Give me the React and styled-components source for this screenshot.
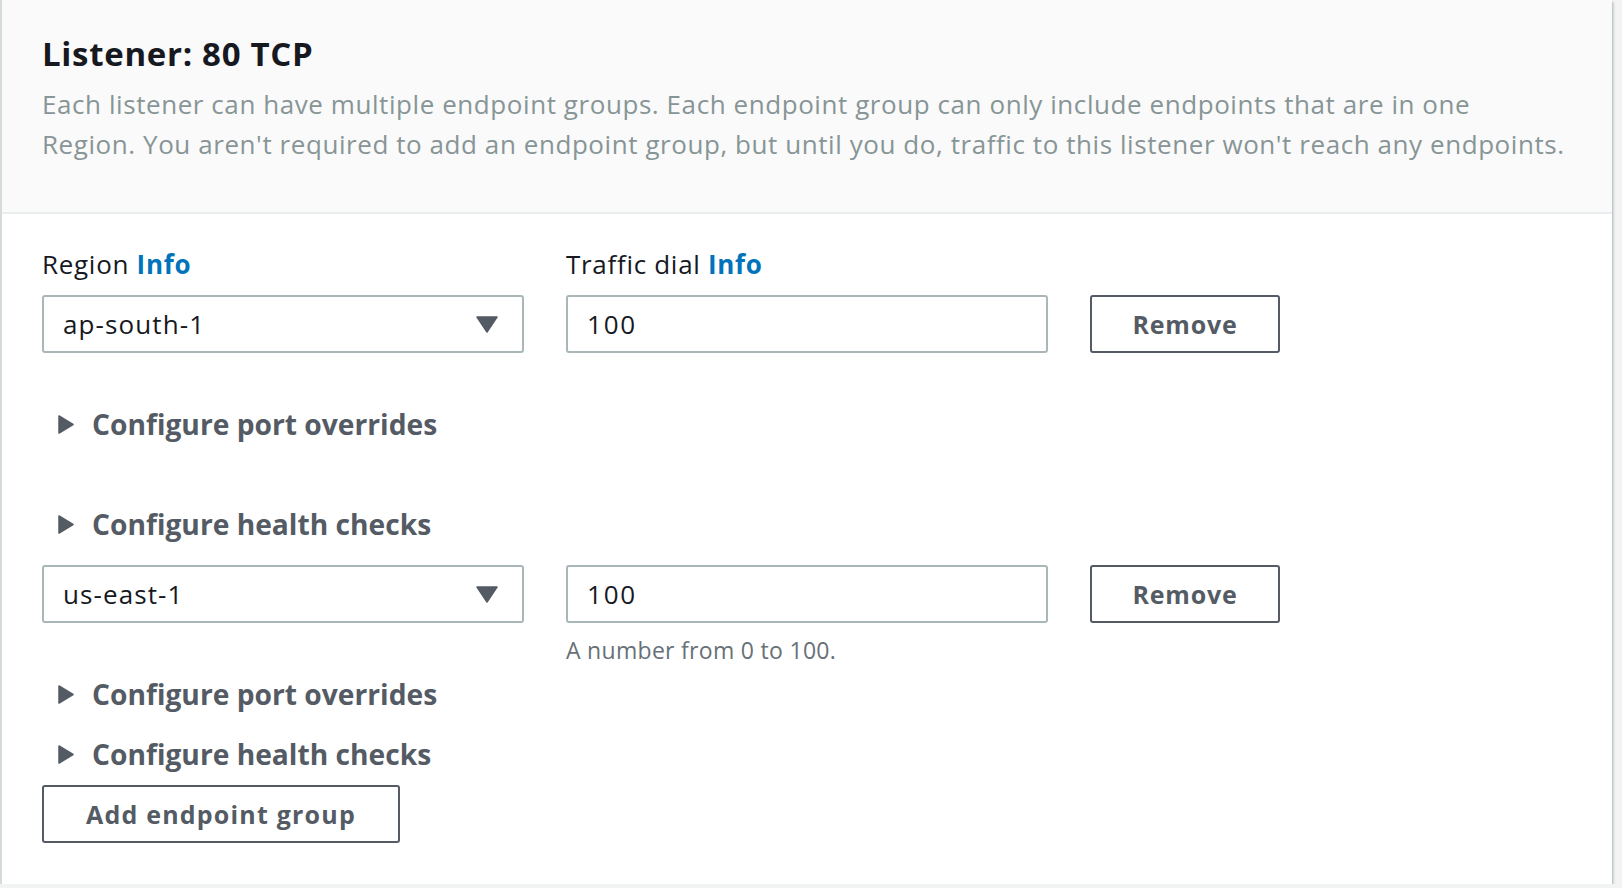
import React from "react";
import styled, { createGlobalStyle } from "styled-components";

const Global = createGlobalStyle`
  html, body { margin: 0; padding: 0; }
  body {
    background: #f2f3f3;
    font-family: "Open Sans", "Noto Sans", sans-serif;
    color: #16191f;
  }
`;

const Panel = styled.section`
  width: 1612px;
  height: 884px;
  box-sizing: border-box;
  background: #ffffff;
  border-left: 2px solid #d5dbdb;
  box-shadow: 0 2px 2px 0 rgba(0, 28, 36, 0.3), 2px 2px 2px 0 rgba(0, 28, 36, 0.12);
  display: flex;
  flex-direction: column;
`;

const Header = styled.header`
  background: #fafafa;
  border-bottom: 2px solid #eaeded;
  padding: 34px 40px 46px 40px;
  height: 214px;
  box-sizing: border-box;
`;

const Title = styled.h2`
  margin: 0;
  font-size: 33px;
  line-height: 40px;
  font-weight: 700;
  letter-spacing: 0.7px;
  color: #16191f;
`;

const Description = styled.p`
  margin: 10px 0 0;
  font-size: 26px;
  line-height: 40px;
  letter-spacing: 0.57px;
  color: #879596;
`;

const Body = styled.div`
  padding: 30px 40px 0 40px;
  display: flex;
  flex-direction: column;
`;

const FieldRow = styled.div`
  display: grid;
  grid-template-columns: 482px 482px 190px;
  column-gap: 42px;
  align-items: start;
  margin-top: ${(p) => p.$mt || 0}px;
`;

const Label = styled.div`
  font-size: 26px;
  line-height: 40px;
  letter-spacing: 0.7px;
  color: #16191f;
  margin-bottom: 11px;
`;

const InfoLink = styled.a`
  color: #0073bb;
  font-weight: 700;
  text-decoration: none;
`;

const Select = styled.div`
  height: 58px;
  box-sizing: border-box;
  border: 2px solid #aab7b8;
  border-radius: 3px;
  display: flex;
  align-items: center;
  justify-content: space-between;
  padding: 0 24px 0 19px;
  font-size: 26px;
  letter-spacing: 1.1px;
  color: #16191f;
  background: #fff;
`;

const Input = styled.div`
  height: 58px;
  box-sizing: border-box;
  border: 2px solid #aab7b8;
  border-radius: 3px;
  display: flex;
  align-items: center;
  padding: 0 19px;
  font-size: 26px;
  letter-spacing: 1.8px;
  color: #16191f;
  background: #fff;
`;

const Button = styled.button`
  height: 58px;
  width: ${(p) => p.$w || 190}px;
  margin-top: ${(p) => p.$mt || 0}px;
  box-sizing: border-box;
  border: 2px solid #545b64;
  border-radius: 3px;
  background: #fff;
  color: #545b64;
  font-family: inherit;
  font-size: 25px;
  font-weight: 700;
  padding: 0;
  cursor: pointer;
  letter-spacing: ${(p) => p.$ls || 0.8}px;
`;

const Help = styled.div`
  font-size: 23px;
  line-height: 32px;
  letter-spacing: 0.3px;
  color: #687078;
  margin-top: 11px;
`;

const Expander = styled.div`
  display: flex;
  align-items: center;
  height: 44px;
  margin-top: ${(p) => p.$mt || 0}px;
  font-size: 28.2px;
  font-weight: 700;
  color: #545b64;
  cursor: pointer;
`;

const Caret = styled.span`
  display: inline-flex;
  width: 50px;
  padding-left: 16px;
  box-sizing: border-box;
`;

const Col = styled.div`
  display: flex;
  flex-direction: column;
`;

const Arrow = () => (
  <svg width="16" height="19" viewBox="0 0 16 19">
    <path d="M1 1 L15 9.5 L1 18 Z" fill="#545b64" stroke="#545b64" strokeWidth="1.5" strokeLinejoin="round" />
  </svg>
);

const DownArrow = () => (
  <svg width="22" height="17" viewBox="0 0 22 17">
    <path d="M1 1 L21 1 L11 16 Z" fill="#545b64" stroke="#545b64" strokeWidth="1.5" strokeLinejoin="round" />
  </svg>
);

const Expand = ({ children, mt }) => (
  <Expander $mt={mt}>
    <Caret>
      <Arrow />
    </Caret>
    {children}
  </Expander>
);

export default function App() {
  return (
    <>
      <Global />
      <Panel>
        <Header>
          <Title>Listener: 80 TCP</Title>
          <Description>
            Each listener can have multiple endpoint groups. Each endpoint group can only include endpoints that are in one
            <br />
            Region. You aren't required to add an endpoint group, but until you do, traffic to this listener won't reach any endpoints.
          </Description>
        </Header>
        <Body>
          <FieldRow>
            <Col>
              <Label>
                Region <InfoLink>Info</InfoLink>
              </Label>
              <Select>
                <span>ap-south-1</span>
                <DownArrow />
              </Select>
            </Col>
            <Col>
              <Label>
                Traffic dial <InfoLink>Info</InfoLink>
              </Label>
              <Input>100</Input>
            </Col>
            <Col>
              <Label>&nbsp;</Label>
              <Button>Remove</Button>
            </Col>
          </FieldRow>
          <Expand mt={49}>Configure port overrides</Expand>
          <Expand mt={56}>Configure health checks</Expand>
          <FieldRow $mt={19}>
            <Select>
              <span>us-east-1</span>
              <DownArrow />
            </Select>
            <Col>
              <Input>100</Input>
              <Help>A number from 0 to 100.</Help>
            </Col>
            <Button>Remove</Button>
          </FieldRow>
          <Expand mt={6}>Configure port overrides</Expand>
          <Expand mt={16}>Configure health checks</Expand>
          <Button $w={358} $mt={9} $ls={1.2}>Add endpoint group</Button>
        </Body>
      </Panel>
    </>
  );
}
